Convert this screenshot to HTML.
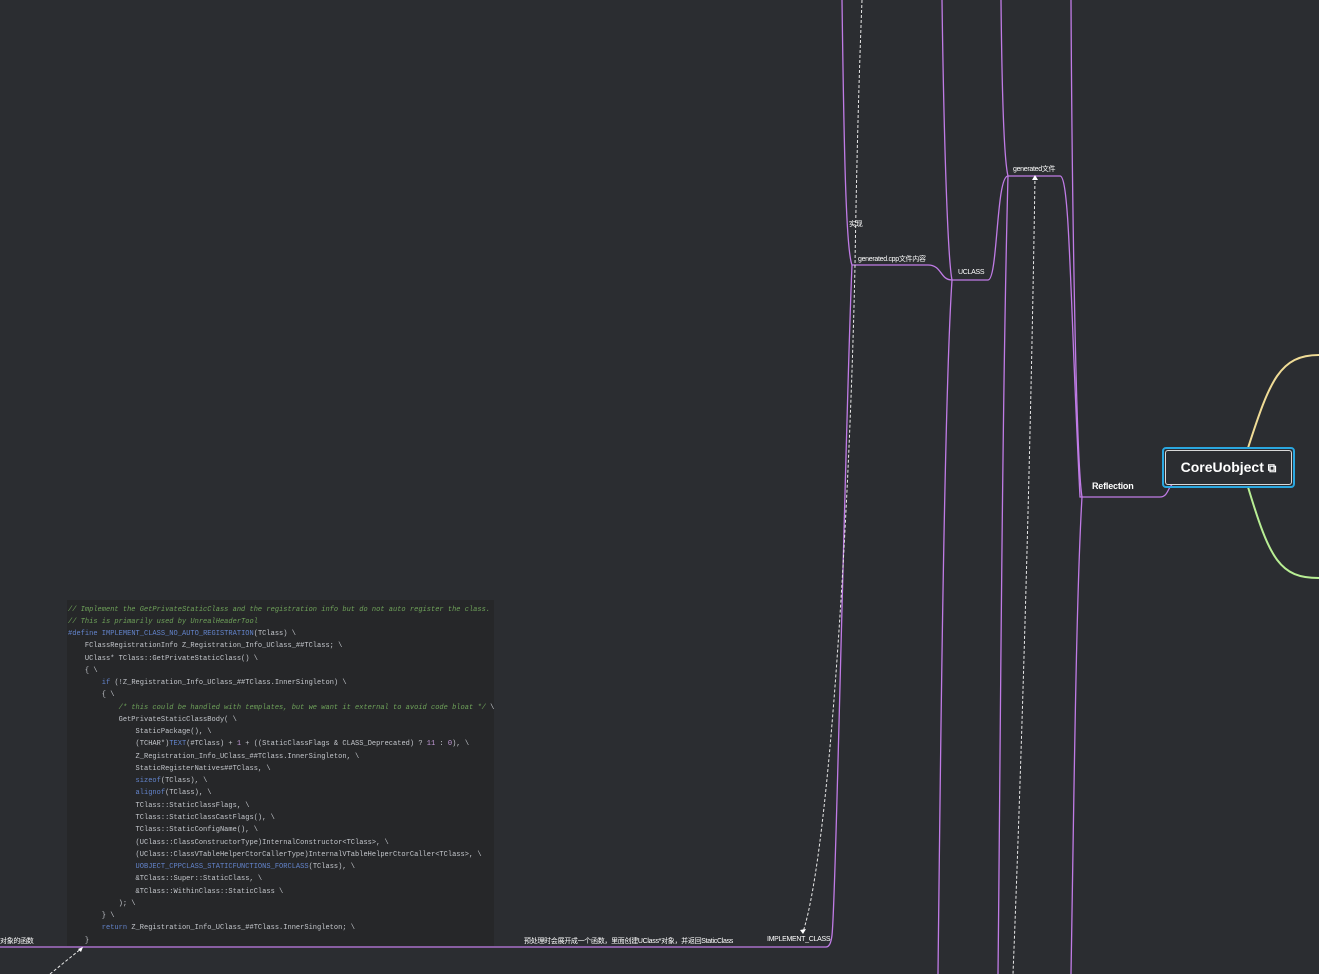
<!DOCTYPE html>
<html><head><meta charset="utf-8"><style>
html,body{margin:0;padding:0;width:1319px;height:974px;overflow:hidden;background:#2b2d31;}
.code{position:absolute;left:67px;top:600px;width:427px;height:346px;background:#262729;}
.code pre{margin:0;position:absolute;left:1px;top:3.5px;font-family:"Liberation Mono",monospace;font-size:7px;letter-spacing:0.02px;line-height:12.27px;color:#c4c7cc;}
.c{color:#6fa35a;font-style:italic}.k{color:#6384cc}.n{color:#c39ad8}
.lbl{position:absolute;font-family:"Liberation Sans","Noto Sans CJK SC",sans-serif;font-size:7px;color:#fff;white-space:nowrap;letter-spacing:-0.3px}
.node{position:absolute;left:1162px;top:447px;width:129px;height:37px;border:2px solid #2aa7e0;border-radius:4px;}
.node .in{position:absolute;left:1px;top:1px;right:1px;bottom:1px;border:1.5px solid #d8d8d8;border-radius:3px;background:#2b2d31;color:#fff;font-family:"Liberation Sans",sans-serif;font-weight:bold;font-size:14px;line-height:32px;text-align:center;}
</style></head><body>
<svg width="1319" height="974" style="position:absolute;left:0;top:0">
<g fill="none" stroke="#c07be6" stroke-width="1.3">
<path d="M842 0 C844 150 846 250 852 265 L928 265 C942 265 940 280 952 280 L988 280 C998 280 996 176 1008 176 L1060 176 C1070 176 1070 300 1080 497 L1160 497 C1168 497 1168 487 1172 485"/>
<path d="M852 265 C846 400 836 900 832 935 C831 944 829 947 826 947 L0 947"/>
<path d="M942 0 C944 150 948 260 952 280 C944 400 940 800 938 974"/>
<path d="M1001 0 C1002 100 1004 160 1008 176 C1002 400 1000 800 998 974"/>
<path d="M1071 0 C1072 200 1076 460 1082 497 C1076 600 1074 800 1071 974"/>
</g>
<path d="M1248 448 C1270 380 1280 355 1319 355" fill="none" stroke="#f0dc96" stroke-width="2"/>
<path d="M1248 487 C1270 560 1280 578 1319 578" fill="none" stroke="#b8ee94" stroke-width="2"/>
<g fill="none" stroke="#e8e8e8" stroke-width="1" stroke-dasharray="3,2">
<path d="M862 0 C858 100 856 200 855 265 C850 500 830 850 803 932"/>
<path d="M1035 176 C1030 500 1020 800 1013 974"/>
<path d="M50 974 L82 948"/>
</g>
<path d="M800 930 L803 934 L806 929Z M1032 180 L1035 175 L1038 180Z M78 949 L83 947 L81 952Z" fill="#fff"/>
</svg>
<div class="code"><pre><span class="c">// Implement the GetPrivateStaticClass and the registration info but do not auto register the class.</span>
<span class="c">// This is primarily used by UnrealHeaderTool</span>
<span class="k">#define</span> <span class="k">IMPLEMENT_CLASS_NO_AUTO_REGISTRATION</span>(TClass) \
    FClassRegistrationInfo Z_Registration_Info_UClass_##TClass; \
    UClass* TClass::GetPrivateStaticClass() \
    { \
        <span class="k">if</span> (!Z_Registration_Info_UClass_##TClass.InnerSingleton) \
        { \
            <span class="c">/* this could be handled with templates, but we want it external to avoid code bloat */</span> \
            GetPrivateStaticClassBody( \
                StaticPackage(), \
                (TCHAR*)<span class="k">TEXT</span>(#TClass) + <span class="n">1</span> + ((StaticClassFlags &amp; CLASS_Deprecated) ? <span class="n">11</span> : <span class="n">0</span>), \
                Z_Registration_Info_UClass_##TClass.InnerSingleton, \
                StaticRegisterNatives##TClass, \
                <span class="k">sizeof</span>(TClass), \
                <span class="k">alignof</span>(TClass), \
                TClass::StaticClassFlags, \
                TClass::StaticClassCastFlags(), \
                TClass::StaticConfigName(), \
                (UClass::ClassConstructorType)InternalConstructor&lt;TClass&gt;, \
                (UClass::ClassVTableHelperCtorCallerType)InternalVTableHelperCtorCaller&lt;TClass&gt;, \
                <span class="k">UOBJECT_CPPCLASS_STATICFUNCTIONS_FORCLASS</span>(TClass), \
                &amp;TClass::Super::StaticClass, \
                &amp;TClass::WithinClass::StaticClass \
            ); \
        } \
        <span class="k">return</span> Z_Registration_Info_UClass_##TClass.InnerSingleton; \
    }</pre></div>
<div class="lbl" style="left:849px;top:219px">实现</div>
<div class="lbl" style="left:858px;top:254px">generated.cpp文件内容</div>
<div class="lbl" style="left:958px;top:269px">UCLASS</div>
<div class="lbl" style="left:1013px;top:164px">generated文件</div>
<div class="lbl" style="left:1092px;top:481px;font-size:9px;font-weight:bold;letter-spacing:-0.2px">Reflection</div>
<div class="lbl" style="left:524px;top:936px">预处理时会展开成一个函数，里面创建UClass*对象，并返回StaticClass</div>
<div class="lbl" style="left:767px;top:936px">IMPLEMENT_CLASS</div>
<div class="lbl" style="left:0px;top:936px">对象的函数</div>
<div class="node"><div class="in">CoreUobject <span style="font-size:12px">⧉</span></div></div>
</body></html>
